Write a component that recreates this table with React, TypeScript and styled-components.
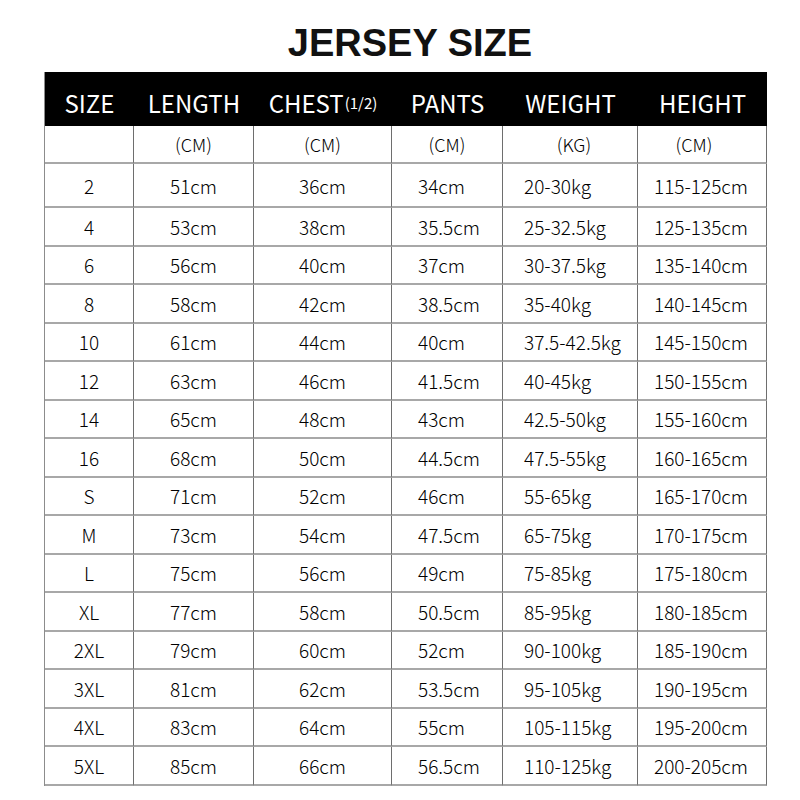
import React from "react";
import styled, { createGlobalStyle } from "styled-components";

const GlobalStyle = createGlobalStyle`
  html, body {
    margin: 0;
    padding: 0;
    background: #ffffff;
  }
  body {
    width: 800px;
    height: 800px;
    overflow: hidden;
    font-family: "Noto Sans CJK SC", "Noto Sans", sans-serif;
    color: #1c1c1c;
  }
`;

const Page = styled.div`
  width: 800px;
  height: 800px;
  display: flex;
  flex-direction: column;
  box-sizing: border-box;
  padding-top: 21px;
`;

const Title = styled.h1`
  margin: 0 0 7px 0;
  padding-left: 20px;
  height: 44px;
  line-height: 44px;
  text-align: center;
  font-family: "Liberation Sans", Arial, sans-serif;
  font-weight: 700;
  font-size: 38px;
  color: #111;
  letter-spacing: 0;
`;

type Align = "center" | "left";

interface Col {
  label: string;
  sub?: string;
  unit: string;
  width: number;
  align: Align;
  pad: number;
  unitShift: number;
}

const columns: Col[] = [
  { label: "SIZE", unit: "", width: 89, align: "center", pad: 0, unitShift: 0 },
  { label: "LENGTH", unit: "(CM)", width: 120, align: "center", pad: 0, unitShift: 0 },
  { label: "CHEST", sub: "(1/2)", unit: "(CM)", width: 138, align: "center", pad: 0, unitShift: 0 },
  { label: "PANTS", unit: "(CM)", width: 111, align: "left", pad: 26, unitShift: 0 },
  { label: "WEIGHT", unit: "(KG)", width: 135, align: "left", pad: 21, unitShift: 4 },
  { label: "HEIGHT", unit: "(CM)", width: 129, align: "left", pad: 16, unitShift: -8 },
];

const rows: string[][] = [
  ["2", "51cm", "36cm", "34cm", "20-30kg", "115-125cm"],
  ["4", "53cm", "38cm", "35.5cm", "25-32.5kg", "125-135cm"],
  ["6", "56cm", "40cm", "37cm", "30-37.5kg", "135-140cm"],
  ["8", "58cm", "42cm", "38.5cm", "35-40kg", "140-145cm"],
  ["10", "61cm", "44cm", "40cm", "37.5-42.5kg", "145-150cm"],
  ["12", "63cm", "46cm", "41.5cm", "40-45kg", "150-155cm"],
  ["14", "65cm", "48cm", "43cm", "42.5-50kg", "155-160cm"],
  ["16", "68cm", "50cm", "44.5cm", "47.5-55kg", "160-165cm"],
  ["S", "71cm", "52cm", "46cm", "55-65kg", "165-170cm"],
  ["M", "73cm", "54cm", "47.5cm", "65-75kg", "170-175cm"],
  ["L", "75cm", "56cm", "49cm", "75-85kg", "175-180cm"],
  ["XL", "77cm", "58cm", "50.5cm", "85-95kg", "180-185cm"],
  ["2XL", "79cm", "60cm", "52cm", "90-100kg", "185-190cm"],
  ["3XL", "81cm", "62cm", "53.5cm", "95-105kg", "190-195cm"],
  ["4XL", "83cm", "64cm", "55cm", "105-115kg", "195-200cm"],
  ["5XL", "85cm", "66cm", "56.5cm", "110-125kg", "200-205cm"],
];

const Table = styled.div`
  margin-left: 44px;
  width: 722px;
  display: grid;
  grid-template-columns: ${columns.map((c) => `${c.width}px`).join(" ")};
  grid-template-rows: 54px 38px 44px repeat(15, 38.5px);
  box-sizing: border-box;
  border-left: 1px solid #8c8c8c;
`;

const HeadCell = styled.div`
  background: #000;
  color: #fff;
  display: flex;
  align-items: center;
  justify-content: center;
  padding-top: 7px;
  box-sizing: border-box;
  font-size: 24px;
  font-weight: 400;
  line-height: 1;
  white-space: nowrap;
`;

const Sub = styled.span`
  font-size: 15px;
  margin-left: 1px;
`;

const Cell = styled.div<{ $align: Align; $pad: number; $shift?: number; $unit?: boolean }>`
  display: flex;
  align-items: center;
  justify-content: ${(p) => (p.$align === "center" ? "center" : "flex-start")};
  padding-left: ${(p) => p.$pad}px;
  box-sizing: border-box;
  border-right: 1px solid #6e6e6e;
  border-bottom: 2px solid #a8a8a8;
  font-size: ${(p) => (p.$unit ? 18 : 19)}px;
  font-weight: 300;
  line-height: 1;
  white-space: nowrap;
  color: #000;
  & > span {
    position: relative;
    left: ${(p) => p.$shift ?? 0}px;
  }
`;

export default function App() {
  return (
    <>
      <GlobalStyle />
      <Page>
        <Title>JERSEY SIZE</Title>
        <Table>
          {columns.map((c) => (
            <HeadCell key={`h-${c.label}`}>
              {c.label}
              {c.sub && <Sub>{c.sub}</Sub>}
            </HeadCell>
          ))}
          {columns.map((c) => (
            <Cell key={`u-${c.label}`} $align="center" $pad={0} $shift={c.unitShift} $unit>
              <span>{c.unit}</span>
            </Cell>
          ))}
          {rows.map((r, ri) =>
            r.map((v, ci) => (
              <Cell key={`${ri}-${ci}`} $align={columns[ci].align} $pad={columns[ci].pad}>
                <span>{v}</span>
              </Cell>
            ))
          )}
        </Table>
      </Page>
    </>
  );
}
